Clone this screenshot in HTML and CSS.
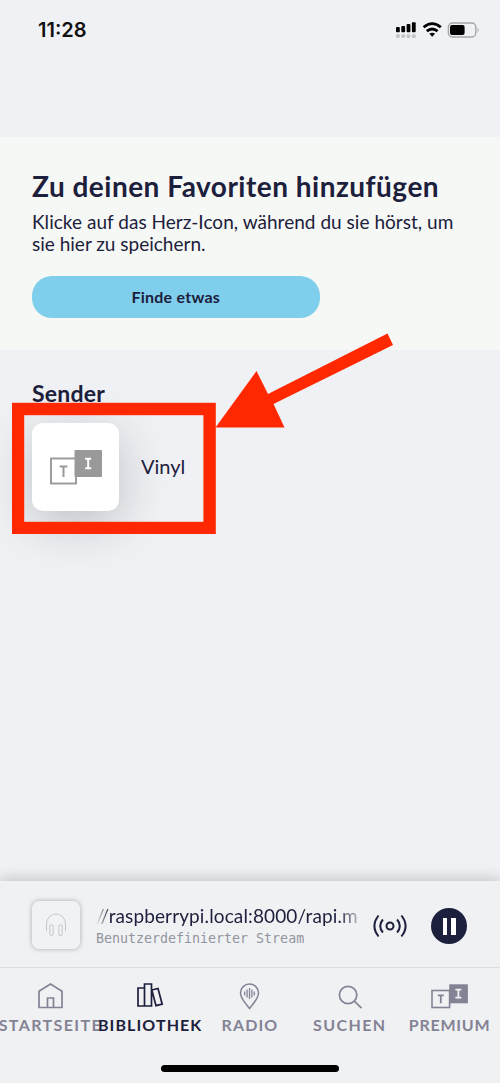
FILE: index.html
```html
<!DOCTYPE html>
<html lang="de">
<head>
<meta charset="utf-8">
<title>Bibliothek</title>
<link rel="stylesheet" href="styles.css">
</head>
<body>
<div class="app">
  <header class="status">
    <span class="time">11:28</span>
    <svg class="status-icons" width="86" height="18" viewBox="0 0 86 18">
      <g fill="#000"><rect x="1" y="6" width="3.8" height="5.3" rx="1"/><rect x="6.3" y="5" width="3.8" height="6.3" rx="1"/><rect x="11.6" y="3" width="3.8" height="8.3" rx="1"/><rect x="16.9" y="1.2" width="3.8" height="10.1" rx="1"/></g>
      <g fill="#c4c5c7"><rect x="1" y="13.2" width="3.8" height="3.7" rx="1.2"/><rect x="6.3" y="13.2" width="3.8" height="3.7" rx="1.2"/><rect x="11.6" y="13.2" width="3.8" height="3.7" rx="1.2"/><rect x="16.9" y="13.2" width="3.8" height="3.7" rx="1.2"/></g>
      <g fill="none" stroke="#000" stroke-width="2.8"><path d="M28.600 6.300Q37.200 -1 45.800 6.300"/><path d="M31.800 10.200Q37.200 5.800 42.600 10.200"/></g>
      <path d="M34.400 12.800Q37.200 10.800 40 12.800L37.200 15.700Z"/>
      <rect x="53.400" y="2" width="27.400" height="14" rx="4" fill="none" stroke="#a5a6a8" stroke-width="1.400"/>
      <rect x="55" y="4" width="14.600" height="10" rx="2"/>
      <path d="M82.600 6.500Q84.800 9 82.600 11.500Z" fill="#a5a6a8"/>
    </svg>
  </header>

  <section class="intro">
    <h1>Zu deinen Favoriten hinzufügen</h1>
    <p><span class="line-one">Klicke auf das Herz-Icon, während du sie hörst, um</span><br><span class="line-two">sie hier zu speichern.</span></p>
    <button class="find">Finde etwas</button>
  </section>

  <main class="stations">
    <h2>Sender</h2>
    <div class="station">
      <div class="cover">
        <svg width="52" height="36" viewBox="0 0 52 36"><rect x="1" y="9.500" width="25" height="25" fill="none" stroke="#999" stroke-width="1.900"/><rect x="24.500" y="1" width="27.500" height="27" rx=".8" fill="#999"/><path d="M9.600 17.600h7.800M13.500 17.600v10.500" fill="none" stroke="#999" stroke-width="2"/><path d="M35.200 9.700h6M38.200 9.700v9.600M35.200 19.300h6" fill="none" stroke="#fff" stroke-width="2"/></svg>
      </div>
      <span class="station-name">Vinyl</span>
    </div>
    <svg class="marker" width="382" height="202" viewBox="0 0 382 202"><rect x="6" y="77" width="191.600" height="119" fill="none" stroke="#ff2800" stroke-width="12.400"/><path d="M203.500 95.500 244.500 39 256 62 375.500 1.500 381 13 261.500 72 272.500 95.500Z" fill="#ff2800"/></svg>
  </main>

  <div class="player">
    <div class="art"><svg width="22" height="24" viewBox="0 0 22 24" fill="none" stroke="#c7c7ca" stroke-width="1"><path d="M1.500 18V11a9.500 10 0 0 1 19 0v7"/><rect x="4.800" y="12" width="3.300" height="10.500" rx="1"/><rect x="13.900" y="12" width="3.300" height="10.500" rx="1"/></svg></div>
    <div class="track"><div class="url">//raspberrypi.local:8000/rapi.m</div><div class="kind">Benutzerdefinierter Stream</div></div>
    <svg class="cast" width="34" height="24" viewBox="0 0 34 24" fill="none" stroke="#1c203c" stroke-width="2"><circle cx="17" cy="12" r="3.500"/><path d="M9.900 5.500q-5.400 6.500 0 13M24.100 5.500q5.400 6.500 0 13M5.600 1.500q-8.400 10.500 0 21M28.400 1.500q8.400 10.500 0 21"/></svg>
    <div class="pause"><i></i><i></i></div>
  </div>

  <nav class="tabs">
    <div class="tab"><svg width="30" height="28" viewBox="0 0 30 28" fill="none" stroke="#848395" stroke-width="1.700"><path d="M4 25.500V9.200L15.500 2 27 9.200v16.300ZM12.500 25.500V16h6v9.500"/></svg><span class="start">STARTSEITE</span></div>
    <div class="tab active"><svg width="30" height="28" viewBox="0 0 30 28" fill="none" stroke="#1c203c" stroke-width="1.700"><path d="M3 6h6.500v18H3ZM9.500 2h7v22h-7ZM16.800 8l6.200-1.500 4.200 15.700-6.200 1.500Z"/></svg><span class="library">BIBLIOTHEK</span></div>
    <div class="tab"><svg width="30" height="28" viewBox="0 0 30 28" fill="none" stroke="#848395" stroke-width="1.500"><path d="M15.500 26.500C13.500 23.500 6.500 17 6.500 11a9 9 0 0 1 18 0c0 6-7 12.500-9 15.500Z"/><path d="M10.700 9.500v4M13.100 7.500v8M15.500 6v11M17.900 7.500v8M20.300 9.500v4" stroke-width="1.300"/></svg><span class="radio">RADIO</span></div>
    <div class="tab"><svg width="30" height="28" viewBox="0 0 30 28" fill="none" stroke="#848395" stroke-width="1.700"><circle cx="14.100" cy="13" r="8.700"/><path d="m20.300 19.200 7.200 7"/></svg><span class="search">SUCHEN</span></div>
    <div class="tab"><svg width="38" height="28" viewBox="0 0 38 28"><rect x="2" y="8.500" width="17.600" height="17" fill="none" stroke="#848395" stroke-width="1.600"/><rect x="19.200" y="2.300" width="18.700" height="19" fill="#848395"/><path d="M7.800 13.300h6M10.800 13.300v8" stroke="#848395" stroke-width="1.800"/><path d="M25.400 7.600h6M28.400 7.600v8M25.400 15.600h6" stroke="#f0f1f3" stroke-width="1.800"/></svg><span class="premium">PREMIUM</span></div>
  </nav>
  <div class="home"></div>
</div>
</body>
</html>
```

FILE: styles.css
```css
* { box-sizing: border-box; }
body { margin: 0; background: #f0f1f4; color: #1c203c; font-family: Lato, "Liberation Sans", sans-serif; }
.app { width: 500px; height: 1083px; display: flex; flex-direction: column; overflow: hidden; }
.status { height: 137px; flex: none; display: flex; justify-content: space-between; align-items: flex-start; padding: 20px 19px 0 38px; }
.time { font: 600 20px/20px Inter, sans-serif; color: #111; letter-spacing: 0; }
.status-icons { margin-top: 1px; }
.intro { height: 213px; flex: none; background: #f6f8f5; padding: 32px 32px 0; }
h1 { margin: 0; font-size: 28px; line-height: 34px; font-weight: 700; white-space: nowrap; letter-spacing: .49px; }
.intro p { margin: 8px 0 20.500px; font-size: 19px; line-height: 22px; white-space: nowrap; }
.line-one { letter-spacing: .03px; }
.line-two { letter-spacing: 0; }
.find { display: block; width: 287.500px; height: 42.500px; border: 0; border-radius: 20px; background: #7fceec; color: #1c203c; font: 700 16px/42px Lato, sans-serif; letter-spacing: .25px; padding: 0; }
.stations { position: relative; flex: 1; padding: 29px 32px 0; }
h2 { margin: 0; font-size: 23px; line-height: 28px; font-weight: 700; letter-spacing: .2px; }
.station { display: flex; align-items: center; gap: 22px; margin-top: 16px; }
.cover { width: 87px; height: 88px; border-radius: 11px; background: #fff; display: flex; align-items: center; justify-content: center; box-shadow: 0 12px 48px rgba(28, 32, 60, .24); }
.station-name { font-size: 20px; line-height: 24px; padding-bottom: 2px; }
.marker { position: absolute; left: 12px; top: -18px; }
.player { position: relative; height: 87px; flex: none; display: flex; align-items: flex-start; padding: 20px 32px 0; background: #f0f1f3; box-shadow: 0 -2px 14px rgba(0, 0, 0, .2); border-bottom: 1px solid #dcdce2; }
.art { width: 48px; height: 48px; border-radius: 7px; display: flex; align-items: center; justify-content: center; background: #f1f2f4; box-shadow: 0 0 5px rgba(0, 0, 0, .3); }
.track { width: 262px; margin-left: 16px; padding-top: 1px; }
.url { font-size: 19px; line-height: 27px; letter-spacing: .12px; white-space: nowrap; background: linear-gradient(90deg, #f0f1f3, #1c203c 14px, #1c203c 242px, #f0f1f3 270px); background-clip: text; color: transparent; }
.kind { font: 13.300px/20px "DejaVu Sans Mono", monospace; color: #9494a1; }
.cast { margin: 13px 0 0 15px; }
.pause { width: 36px; height: 36px; border-radius: 50%; background: #1c203c; display: flex; align-items: center; justify-content: center; gap: 4px; margin: 7px 0 0 24px; }
.pause i { width: 4.500px; height: 17px; background: #fff; }
.tabs { height: 91px; flex: none; display: grid; grid-template-columns: repeat(5, 99.800px); background: #f0f1f3; position: relative; }
.tab { display: flex; flex-direction: column; align-items: center; padding-top: 14px; color: #848395; min-width: 0; }
.tab span { font-weight: 700; font-size: 16px; line-height: 22px; margin-top: 4px; padding-left: 1px; letter-spacing: 1.100px; white-space: nowrap; }
.tab .start { letter-spacing: 1.400px; }
.tab .search { letter-spacing: 1.400px; }
.tab .premium { letter-spacing: .750px; }
.tab.active { color: #1c203c; }
.home { height: 24px; flex: none; background: #f0f1f3; position: relative; padding: 6px 0 0 161px; }
.home::before { content: ""; display: block; width: 178px; height: 7px; border-radius: 4px; background: #000; }
```
